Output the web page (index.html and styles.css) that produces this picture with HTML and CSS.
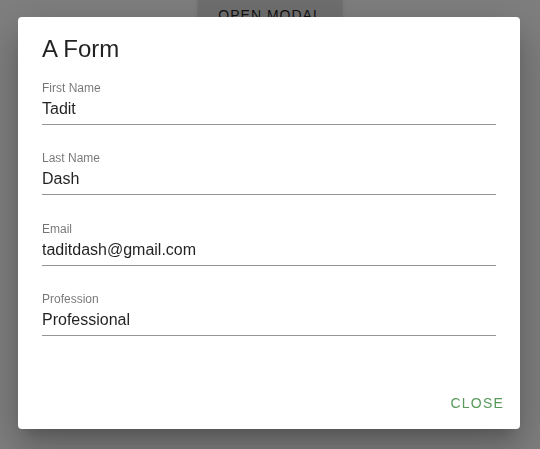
FILE: index.html
```html
<!DOCTYPE html>
<html lang="en">
<head>
<meta charset="utf-8">
<title>A Form</title>
<link rel="stylesheet" href="styles.css">
</head>
<body>
<main class="page">
  <button class="open-btn" type="button">Open Modal</button>
</main>
<div class="backdrop">
  <section class="dialog" role="dialog" aria-labelledby="dlg-title">
    <h2 class="dialog-title" id="dlg-title">A Form</h2>
    <div class="dialog-content">
      <div class="field">
        <label class="field-label">First Name</label>
        <div class="field-value">Tadit</div>
      </div>
      <div class="field">
        <label class="field-label">Last Name</label>
        <div class="field-value">Dash</div>
      </div>
      <div class="field">
        <label class="field-label">Email</label>
        <div class="field-value">taditdash@gmail.com</div>
      </div>
      <div class="field">
        <label class="field-label">Profession</label>
        <div class="field-value">Professional</div>
      </div>
    </div>
    <div class="dialog-actions">
      <button class="close-btn" type="button">Close</button>
    </div>
  </section>
</div>
</body>
</html>
```

FILE: styles.css
```css
html, body {
  margin: 0;
  padding: 0;
  height: 100%;
  background: #ffffff;
  font-family: "Liberation Sans", Arial, sans-serif;
  overflow: hidden;
}

.page {
  display: flex;
  justify-content: center;
  margin-top: -3px;
}

.open-btn {
  font-family: "Liberation Sans", Arial, sans-serif;
  font-size: 14px;
  line-height: 24.5px;
  letter-spacing: 1px;
  text-transform: uppercase;
  color: rgba(0, 0, 0, 0.87);
  background: #e0e0e0;
  border: none;
  border-radius: 4px;
  padding: 6px 20px;
  box-shadow: 0 3px 1px -2px rgba(0,0,0,0.2), 0 2px 2px 0 rgba(0,0,0,0.14), 0 1px 5px 0 rgba(0,0,0,0.12);
}

.backdrop {
  position: fixed;
  inset: 0;
  background: rgba(0, 0, 0, 0.5);
  display: flex;
  align-items: flex-start;
  justify-content: flex-start;
  padding: 17px 0 0 18px;
}

.dialog {
  width: 502px;
  height: 412px;
  box-sizing: border-box;
  background: #ffffff;
  border-radius: 4px;
  display: flex;
  flex-direction: column;
  box-shadow: 0 11px 15px -7px rgba(0,0,0,0.2), 0 24px 38px 3px rgba(0,0,0,0.14), 0 9px 46px 8px rgba(0,0,0,0.12);
}

.dialog-title {
  margin: 0;
  padding: 16px 24px 0;
  font-size: 24px;
  line-height: 32px;
  font-weight: 400;
  color: rgba(0, 0, 0, 0.87);
}

.dialog-content {
  padding: 15px 24px 0;
  display: flex;
  flex-direction: column;
  gap: 25.33px;
}

.field {
  display: flex;
  flex-direction: column;
  gap: 3px;
  padding-bottom: 5px;
  border-bottom: 1px solid rgba(0, 0, 0, 0.42);
}

.field-label {
  font-size: 12px;
  line-height: 16px;
  color: rgba(0, 0, 0, 0.54);
}

.field-value {
  font-size: 16px;
  line-height: 20px;
  color: rgba(0, 0, 0, 0.87);
}

.dialog-actions {
  margin-top: auto;
  display: flex;
  justify-content: flex-end;
  padding: 8px;
}

.close-btn {
  font-family: "Liberation Sans", Arial, sans-serif;
  font-size: 14px;
  line-height: 24.5px;
  letter-spacing: 1.2px;
  text-transform: uppercase;
  color: #58985a;
  background: transparent;
  border: none;
  border-radius: 4px;
  padding: 6px 8px;
}
```
